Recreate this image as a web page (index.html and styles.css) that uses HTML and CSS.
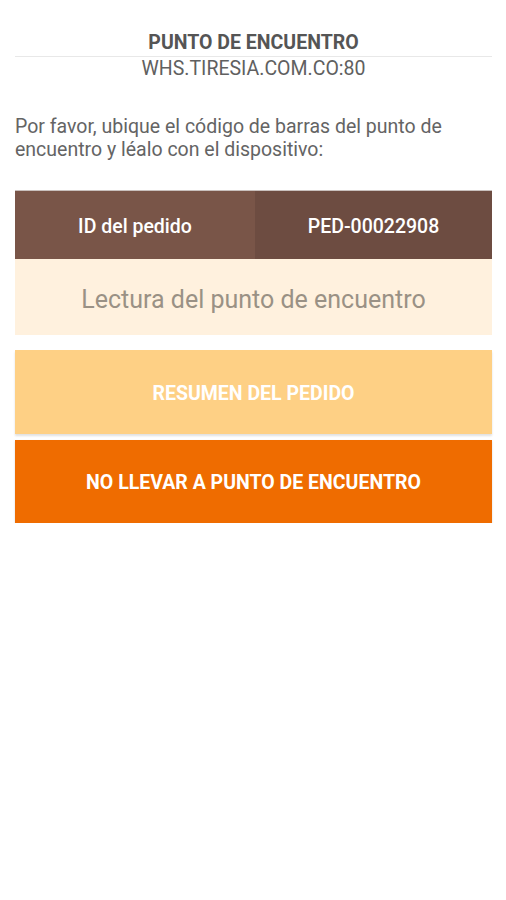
FILE: index.html
```html
<!DOCTYPE html>
<html lang="es">
<head>
<meta charset="utf-8">
<title>Punto de encuentro</title>
<link rel="stylesheet" href="styles.css">
</head>
<body>
<div class="page">
  <header class="header">
    <div class="title">PUNTO DE ENCUENTRO</div>
    <div class="host">WHS.TIRESIA.COM.CO:80</div>
  </header>
  <p class="intro">Por favor, ubique el código de barras del punto de encuentro y léalo con el dispositivo:</p>
  <div class="order">
    <div class="order-label">ID del pedido</div>
    <div class="order-value">PED-00022908</div>
  </div>
  <div class="reading">Lectura del punto de encuentro</div>
  <div class="btn btn-summary">RESUMEN DEL PEDIDO</div>
  <div class="btn btn-skip">NO LLEVAR A PUNTO DE ENCUENTRO</div>
</div>
</body>
</html>
```
FILE: styles.css
```css
html, body {
  margin: 0;
  padding: 0;
  background: #ffffff;
}
body {
  font-family: Roboto, "Liberation Sans", Arial, sans-serif;
  color: #555555;
}
.page {
  padding: 31px 14px 0 15px;
  display: flex;
  flex-direction: column;
}
.header {
  display: flex;
  flex-direction: column;
  align-items: center;
}
.title {
  font-size: 19.5px;
  font-weight: bold;
  color: #555555;
  line-height: 24px;
  padding-bottom: 1px;
  width: 100%;
  text-align: center;
  border-bottom: 1px solid #e8e8e8;
}
.host {
  font-size: 19.5px;
  line-height: 24px;
  color: #606060;
}
.intro {
  margin: 34px 0 0 0;
  font-size: 19.5px;
  line-height: 23px;
  color: #646464;
}
.order {
  margin-top: 30px;
  display: grid;
  grid-template-columns: 240px 1fr;
  height: 68px;
  box-shadow: 0 -1px 0 #c9c0bd;
}
.order-label, .order-value {
  display: flex;
  align-items: center;
  justify-content: center;
  color: #ffffff;
  font-size: 19.5px;
  font-weight: 500;
  padding-top: 2px;
}
.order-label { background: #795548; }
.order-value { background: #6d4c41; }
.reading {
  height: 76px;
  background: #fff1de;
  display: flex;
  align-items: center;
  justify-content: center;
  padding-top: 4px;
  box-sizing: border-box;
  font-size: 25px;
  color: #9a9185;
}
.btn {
  display: flex;
  align-items: center;
  justify-content: center;
  box-sizing: border-box;
  color: #ffffff;
  font-weight: bold;
  font-size: 19.5px;
}
.btn-summary {
  margin-top: 15px;
  height: 84px;
  padding-top: 3px;
  background: #fed085;
  box-shadow: 0 2px 2px rgba(0,0,0,0.12);
}
.btn-skip {
  margin-top: 6px;
  height: 83px;
  padding-top: 2px;
  background: #ef6c00;
  box-shadow: 0 1px 2px rgba(0,0,0,0.15);
}
```
